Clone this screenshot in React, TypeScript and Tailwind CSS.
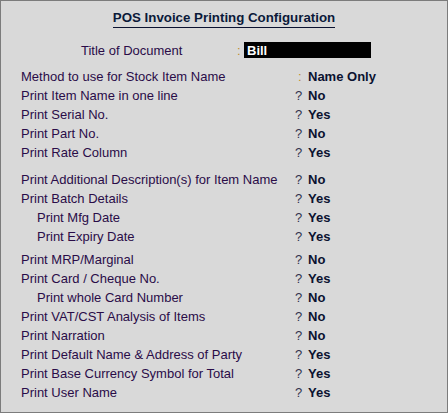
type Row = {
  label: string;
  value: string;
  indent?: boolean;
  gap?: string;
};

const rows: Row[] = [
  { label: "Print Item Name in one line", value: "No" },
  { label: "Print Serial No.", value: "Yes" },
  { label: "Print Part No.", value: "No" },
  { label: "Print Rate Column", value: "Yes" },
  { label: "Print Additional Description(s) for Item Name", value: "No", gap: "mt-[8px]" },
  { label: "Print Batch Details", value: "Yes" },
  { label: "Print Mfg Date", value: "Yes", indent: true },
  { label: "Print Expiry Date", value: "Yes", indent: true },
  { label: "Print MRP/Marginal", value: "No", gap: "mt-[4px]" },
  { label: "Print Card / Cheque No.", value: "Yes" },
  { label: "Print whole Card Number", value: "No", indent: true },
  { label: "Print VAT/CST Analysis of Items", value: "No" },
  { label: "Print Narration", value: "No" },
  { label: "Print Default Name & Address of Party", value: "Yes" },
  { label: "Print Base Currency Symbol for Total", value: "Yes" },
  { label: "Print User Name", value: "Yes" },
];

function OptionRow({ row }: { row: Row }) {
  return (
    <div className={`flex h-[19px] items-center ${row.gap ?? ""}`}>
      <span
        className={`w-[274px] text-[#2a0c48] ${row.indent ? "pl-[16px]" : ""}`}
      >
        {row.label}
      </span>
      <span className="w-[13px] text-[#33334d]">?</span>
      <span className="font-bold text-[#0b1230]">{row.value}</span>
    </div>
  );
}

export default function App() {
  return (
    <div className="h-[413px] w-[448px] border border-[#7c7c7c] bg-[#d9d9d9] font-['Liberation_Sans',Arial,sans-serif] text-[13px] leading-none">
      <div className="pt-[10px] text-center">
        <span className="border-b border-[#0b1230] pb-[2px] text-[13.3px] font-bold text-[#0b1a3a]">
          POS Invoice Printing Configuration
        </span>
      </div>

      <div className="mt-[18px] flex h-[16px] items-center pl-[80px]">
        <span className="w-[156px] text-[#2a0c48]">Title of Document</span>
        <span className="w-[7px] text-[#c0902a]">:</span>
        <span className="flex h-[16px] w-[127px] items-center bg-black pl-[3px] font-bold text-white">
          Bill
        </span>
      </div>

      <div className="mt-[9px] px-[20px]">
        <div className="flex h-[19px] items-center">
          <span className="w-[277px] text-[#2a0c48]">
            Method to use for Stock Item Name
          </span>
          <span className="w-[10px] text-[#c0902a]">:</span>
          <span className="font-bold text-[#0b1230]">Name Only</span>
        </div>
        {rows.map((row) => (
          <OptionRow key={row.label} row={row} />
        ))}
      </div>
    </div>
  );
}
